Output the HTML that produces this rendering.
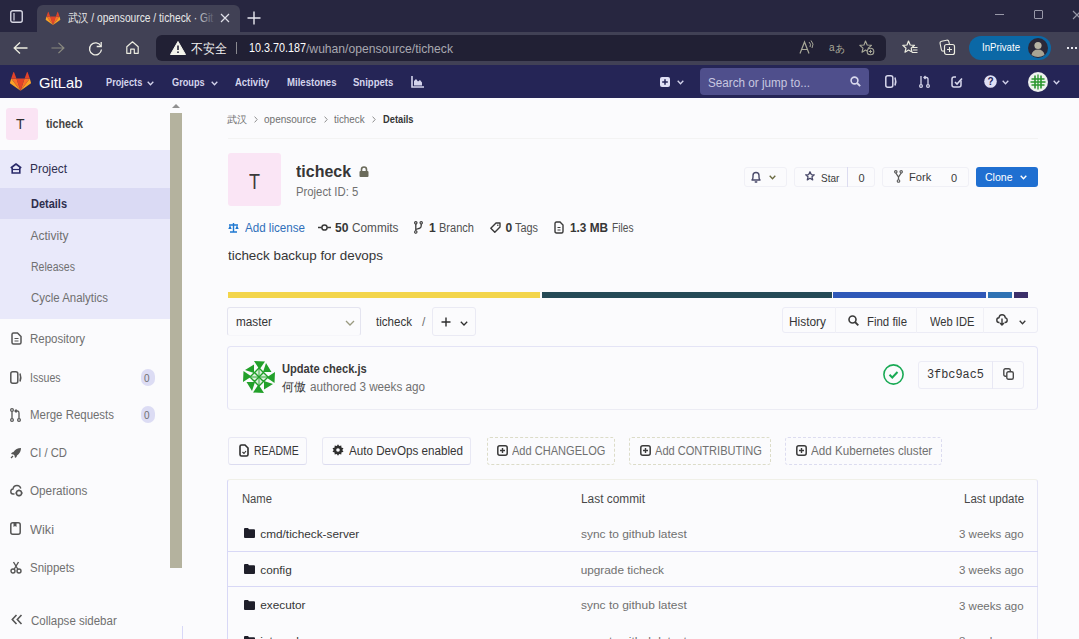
<!DOCTYPE html>
<html><head><meta charset="utf-8"><title>ticheck · GitLab</title>
<style>
html,body{margin:0;padding:0;width:1079px;height:639px;overflow:hidden;background:#fbfbfd;font-family:"Liberation Sans",sans-serif;}
.a{position:absolute;box-sizing:border-box;}
.tx{position:absolute;white-space:pre;line-height:1;transform-origin:0 50%;font-family:"Liberation Sans",sans-serif;}
svg{position:absolute;overflow:visible;}
</style></head><body>
<!-- browser tab strip -->
<div class="a" style="left:0;top:0;width:1079px;height:33px;background:#272640"></div>
<div class="a" style="left:37px;top:5px;width:203px;height:28px;background:#414155;border-radius:6px 6px 0 0"></div>
<svg style="left:10px;top:10px" width="13" height="13" viewBox="0 0 13 13"><rect x="0.75" y="0.75" width="11.5" height="11.5" rx="2" fill="none" stroke="#d8d8e4" stroke-width="1.4"/><line x1="4" y1="3" x2="4" y2="10.5" stroke="#d8d8e4" stroke-width="1.2"/></svg>
<!-- favicon -->
<svg style="left:45px;top:12px" width="16" height="13" viewBox="0 0 36 32"><path d="M18 32 L25 11 H11 Z" fill="#e24329"/><path d="M18 32 L11 11 H2 Z" fill="#fc6d26"/><path d="M2 11 L0 18 a1.5 1.5 0 0 0 .5 1.6 L18 32 Z" fill="#fca326"/><path d="M2 11 H11 L7 0 a.7.7 0 0 0 -1.3 0 Z" fill="#e24329"/><path d="M18 32 L25 11 H34 Z" fill="#fc6d26"/><path d="M34 11 L36 18 a1.5 1.5 0 0 1 -.5 1.6 L18 32 Z" fill="#fca326"/><path d="M34 11 H25 L29 0 a.7.7 0 0 1 1.3 0 Z" fill="#e24329"/></svg>
<svg style="left:220px;top:13px" width="10" height="10" viewBox="0 0 10 10"><path d="M1 1 L9 9 M9 1 L1 9" stroke="#e0e0e8" stroke-width="1.2"/></svg>
<svg style="left:247px;top:11px" width="14" height="14" viewBox="0 0 14 14"><path d="M7 0.5 V13.5 M0.5 7 H13.5" stroke="#e8e8f0" stroke-width="1.4"/></svg>
<!-- window controls -->
<div class="a" style="left:995px;top:14px;width:9px;height:1px;background:#9898a8"></div>
<div class="a" style="left:1034px;top:10px;width:9px;height:9px;border:1px solid #9898a8;border-radius:1px"></div>
<svg style="left:1072px;top:10px" width="10" height="10" viewBox="0 0 10 10"><path d="M1 1 L9 9 M9 1 L1 9" stroke="#9898a8" stroke-width="1.1"/></svg>
<!-- toolbar -->
<div class="a" style="left:0;top:32px;width:1079px;height:33px;background:#414155"></div>
<svg style="left:13px;top:41px" width="15" height="14" viewBox="0 0 15 14"><path d="M14.5 7 H1.5 M7 1.5 L1.2 7 L7 12.5" fill="none" stroke="#ecece0" stroke-width="1.3"/></svg>
<svg style="left:51px;top:41px" width="14" height="14" viewBox="0 0 15 14"><path d="M0.5 7 H13.5 M8 1.5 L13.8 7 L8 12.5" fill="none" stroke="#8a8a80" stroke-width="1.3"/></svg>
<svg style="left:88px;top:41px" width="15" height="15" viewBox="0 0 15 15"><path d="M12.8 5 A6 6 0 1 0 13.5 8.5" fill="none" stroke="#ecece4" stroke-width="1.3"/><path d="M13.2 1 V5.5 H8.7" fill="none" stroke="#ecece4" stroke-width="1.3"/></svg>
<svg style="left:126px;top:41px" width="13" height="13" viewBox="0 0 13 13"><path d="M0.8 5.8 L6.5 0.8 L12.2 5.8 V12.3 H8.3 V8.2 H4.7 V12.3 H0.8 Z" fill="none" stroke="#ecece0" stroke-width="1.2" stroke-linejoin="round"/></svg>
<div class="a" style="left:156px;top:35px;width:730px;height:26px;background:#212034;border-radius:6px"></div>
<svg style="left:170px;top:41px" width="16" height="14" viewBox="0 0 16 14"><path d="M8 0.5 L15.5 13.5 H0.5 Z" fill="#f4f4ec" stroke="#f4f4ec" stroke-linejoin="round"/><path d="M8 4.5 V9" stroke="#232236" stroke-width="1.6"/><circle cx="8" cy="11.2" r="0.9" fill="#232236"/></svg>
<div class="a" style="left:236px;top:42px;width:1px;height:12px;background:#8a8a90"></div>
<!-- right toolbar icons -->
<svg style="left:799px;top:40px" width="15" height="15" viewBox="0 0 15 15"><path d="M1 13.5 L5.5 2 L10 13.5 M2.8 9.5 H8.2" fill="none" stroke="#a8a898" stroke-width="1.2"/><path d="M10 2 Q12.5 4 11 7 M12 0.5 Q15.5 4 13 8" fill="none" stroke="#a8a898" stroke-width="1"/></svg>
<svg style="left:829px;top:41px" width="15" height="13" viewBox="0 0 15 13"><text x="0" y="10" font-family="Liberation Sans" font-size="10" fill="#a8a898">a</text><text x="6" y="11" font-family="Liberation Sans" font-size="10" fill="#a8a898">あ</text></svg>
<svg style="left:859px;top:40px" width="16" height="16" viewBox="0 0 16 16"><path d="M6.5 1 L8.2 5 L12.5 5.3 L9.2 8.2 L10 12 L6.5 10 L3 12.2 L4 8.2 L0.8 5.3 L5 5 Z" fill="none" stroke="#a8a898" stroke-width="1.1" stroke-linejoin="round"/><circle cx="11.5" cy="11.5" r="3.3" fill="#232236" stroke="#a8a898" stroke-width="1.1"/><path d="M11.5 9.8 V13.2 M9.8 11.5 H13.2" stroke="#a8a898" stroke-width="1"/></svg>
<svg style="left:902px;top:40px" width="16" height="15" viewBox="0 0 16 15"><path d="M6.5 1 L8.2 5 L12.5 5.3 L9.2 8.2 L10 12 L6.5 10 L3 12.2 L4 8.2 L0.8 5.3 L5 5 Z" fill="none" stroke="#ecece0" stroke-width="1.2" stroke-linejoin="round"/><path d="M10.5 7.5 H15.5 M11 10 H15.5 M10 12.5 H15.5" stroke="#ecece0" stroke-width="1.1"/></svg>
<svg style="left:940px;top:40px" width="15" height="15" viewBox="0 0 15 15"><rect x="0.7" y="0.7" width="9" height="10" rx="2" fill="none" stroke="#ecece0" stroke-width="1.1" transform="rotate(-12 5 6)"/><rect x="4.5" y="4.5" width="10" height="10" rx="2" fill="#414155" stroke="#ecece0" stroke-width="1.2"/><path d="M9.5 7 V12 M7 9.5 H12" stroke="#ecece0" stroke-width="1.1"/></svg>
<div class="a" style="left:969px;top:36px;width:82px;height:24px;background:#0b68a6;border-radius:12px"></div>
<svg style="left:1028px;top:38px" width="20" height="20" viewBox="0 0 20 20"><circle cx="10" cy="10" r="10" fill="#2a2838"/><circle cx="10" cy="7.5" r="3.6" fill="#b8b4a4"/><path d="M3.5 17 Q4.5 11.5 10 11.5 Q15.5 11.5 16.5 17 Q10 21 3.5 17 Z" fill="#a8a494"/></svg>
<div class="a" style="left:1067px;top:47px;width:2px;height:2px;background:#e8e8f0"></div>
<div class="a" style="left:1071px;top:47px;width:2px;height:2px;background:#e8e8f0"></div>
<div class="a" style="left:1075px;top:47px;width:2px;height:2px;background:#e8e8f0"></div>
<!-- gitlab navbar -->
<div class="a" style="left:0;top:65px;width:1079px;height:33px;background:#252556"></div>
<svg style="left:10px;top:72px" width="21" height="19" viewBox="0 0 36 32"><path d="M18 32 L25 11 H11 Z" fill="#e24329"/><path d="M18 32 L11 11 H2 Z" fill="#fc6d26"/><path d="M2 11 L0 18 a1.5 1.5 0 0 0 .5 1.6 L18 32 Z" fill="#fca326"/><path d="M2 11 H11 L7 0 a.7.7 0 0 0 -1.3 0 Z" fill="#e24329"/><path d="M18 32 L25 11 H34 Z" fill="#fc6d26"/><path d="M34 11 L36 18 a1.5 1.5 0 0 1 -.5 1.6 L18 32 Z" fill="#fca326"/><path d="M34 11 H25 L29 0 a.7.7 0 0 1 1.3 0 Z" fill="#e24329"/></svg>
<svg style="left:147px;top:81px" width="7" height="5" viewBox="0 0 7 5"><path d="M0.7 0.8 L3.5 3.8 L6.3 0.8" fill="none" stroke="#d4d4ec" stroke-width="1.3"/></svg>
<svg style="left:211px;top:81px" width="7" height="5" viewBox="0 0 7 5"><path d="M0.7 0.8 L3.5 3.8 L6.3 0.8" fill="none" stroke="#d4d4ec" stroke-width="1.3"/></svg>
<svg style="left:411px;top:76px" width="13" height="12" viewBox="0 0 13 12"><path d="M1 0 V11 H13" fill="none" stroke="#d4d4ec" stroke-width="1.6"/><path d="M3 9.5 V5 L5 3 L7 5.5 L9 4 L11 6.5 V9.5 Z" fill="#d4d4ec"/></svg>
<div class="a" style="left:660px;top:77px;width:10px;height:10px;background:#e0e0f4;border-radius:2px"></div>
<svg style="left:660px;top:77px" width="10" height="10" viewBox="0 0 10 10"><path d="M5 2.2 V7.8 M2.2 5 H7.8" stroke="#252556" stroke-width="1.5"/></svg>
<svg style="left:677px;top:80px" width="7" height="5" viewBox="0 0 7 5"><path d="M0.7 0.8 L3.5 3.8 L6.3 0.8" fill="none" stroke="#d4d4ec" stroke-width="1.3"/></svg>
<div class="a" style="left:700px;top:68px;width:169px;height:27px;background:#4f4f8c;border-radius:4px"></div>
<svg style="left:850px;top:76px" width="11" height="11" viewBox="0 0 11 11"><circle cx="4.5" cy="4.5" r="3.4" fill="none" stroke="#d8d8ec" stroke-width="1.6"/><path d="M7 7 L10.2 10.2" stroke="#d8d8ec" stroke-width="1.8"/></svg>
<svg style="left:885px;top:75px" width="12" height="13" viewBox="0 0 12 13"><rect x="0.8" y="0.8" width="7" height="11.4" rx="2" fill="none" stroke="#d8d8ec" stroke-width="1.5"/><path d="M10 2.5 Q11.5 6.5 10 10.5" fill="none" stroke="#d8d8ec" stroke-width="1.5"/></svg>
<svg style="left:919px;top:75px" width="11" height="13" viewBox="0 0 11 13"><circle cx="2" cy="11" r="1.4" fill="none" stroke="#d8d8ec" stroke-width="1.2"/><circle cx="9" cy="11" r="1.4" fill="none" stroke="#d8d8ec" stroke-width="1.2"/><path d="M2 1 V9.5 M9 9.5 V4 Q9 2.5 7.5 2.5 H5 M6.5 1 L5 2.5 L6.5 4" fill="none" stroke="#d8d8ec" stroke-width="1.3"/></svg>
<svg style="left:951px;top:75px" width="12" height="13" viewBox="0 0 12 13"><path d="M10 5.5 V10 Q10 12 8 12 H3 Q1 12 1 10 V4 Q1 2 3 2 H5" fill="none" stroke="#d8d8ec" stroke-width="1.5"/><path d="M4 7 L6 9 L11 3.5" fill="none" stroke="#d8d8ec" stroke-width="1.6"/></svg>
<svg style="left:984px;top:75px" width="13" height="13" viewBox="0 0 13 13"><circle cx="6.5" cy="6.5" r="6.3" fill="#e0e0f4"/><text x="6.5" y="10.2" text-anchor="middle" font-family="Liberation Sans" font-weight="700" font-size="10" fill="#252556">?</text></svg>
<svg style="left:1002px;top:80px" width="7" height="5" viewBox="0 0 7 5"><path d="M0.7 0.8 L3.5 3.8 L6.3 0.8" fill="none" stroke="#d4d4ec" stroke-width="1.3"/></svg>
<svg style="left:1028px;top:72px" width="20" height="20" viewBox="0 0 20 20"><circle cx="10" cy="10" r="10" fill="#eef2ee"/><path d="M7 3.5 V16.5 M13 3.5 V16.5 M3.5 7 H16.5 M3.5 13 H16.5" stroke="#2a962e" stroke-width="1.6"/><path d="M10 2.5 V17.5 M2.5 10 H17.5" stroke="#2a962e" stroke-width="1.3"/></svg>
<svg style="left:1053px;top:80px" width="7" height="5" viewBox="0 0 7 5"><path d="M0.7 0.8 L3.5 3.8 L6.3 0.8" fill="none" stroke="#d4d4ec" stroke-width="1.3"/></svg>
<!-- sidebar -->
<div class="a" style="left:0;top:150px;width:170px;height:169px;background:#e9e9fa"></div>
<div class="a" style="left:0;top:188px;width:170px;height:31px;background:#dadaf4"></div>
<div class="a" style="left:6px;top:108px;width:32px;height:32px;background:#fae4f4;border-radius:3px"></div>
<span class="tx" style="left:16px;top:117px;font-size:14px;color:#2e2e2e">T</span>
<svg style="left:10px;top:163px" width="12" height="11" viewBox="0 0 12 11"><path d="M0.8 5 L6 1 L11.2 5" fill="none" stroke="#2a2a6a" stroke-width="1.6" stroke-linejoin="round"/><path d="M2.2 4.5 V10 H9.8 V4.5" fill="none" stroke="#2a2a6a" stroke-width="1.6"/><path d="M3 6.5 H9" stroke="#2a2a6a" stroke-width="1.2"/></svg>
<svg style="left:11px;top:332px" width="11" height="13" viewBox="0 0 11 13"><path d="M1 2.5 Q1 1 2.5 1 H6.5 L10 4.5 V10.5 Q10 12 8.5 12 H2.5 Q1 12 1 10.5 Z" fill="none" stroke="#555" stroke-width="1.5"/><path d="M3.5 6.5 H7.5 M3.5 9 H7.5" stroke="#555" stroke-width="1.1"/></svg>
<svg style="left:10px;top:371px" width="12" height="13" viewBox="0 0 12 13"><rect x="0.8" y="0.8" width="7" height="11.4" rx="2" fill="none" stroke="#555" stroke-width="1.5"/><path d="M10 2.5 Q11.5 6.5 10 10.5" fill="none" stroke="#555" stroke-width="1.5"/></svg>
<svg style="left:10px;top:408px" width="11" height="14" viewBox="0 0 11 14"><circle cx="2" cy="12" r="1.4" fill="none" stroke="#555" stroke-width="1.2"/><circle cx="9" cy="12" r="1.4" fill="none" stroke="#555" stroke-width="1.2"/><circle cx="2" cy="2" r="1.4" fill="none" stroke="#555" stroke-width="1.2"/><path d="M2 3.5 V10.5 M9 10.5 V5 Q9 3 7.5 3 H5 M6.5 1.5 L5 3 L6.5 4.5" fill="none" stroke="#555" stroke-width="1.3"/></svg>
<svg style="left:10px;top:447px" width="12" height="12" viewBox="0 0 12 12"><path d="M11 1 Q6 1 3.5 5 L2 5.5 L1 7 L3.5 7.5 L4.5 8.5 L5 11 L6.5 10 L7 8.5 Q11 6 11 1 Z" fill="#555"/><path d="M1 11 L3 9" stroke="#555" stroke-width="1.3"/></svg>
<svg style="left:10px;top:484px" width="13" height="13" viewBox="0 0 13 13"><path d="M4.5 10 H3 Q0.8 10 0.8 7.5 Q0.8 5.2 3 5 Q3.5 1.5 7 1.5 Q10 1.5 10.8 4.5" fill="none" stroke="#555" stroke-width="1.4"/><circle cx="9" cy="9" r="2.6" fill="none" stroke="#555" stroke-width="1.5"/><path d="M9 5.5 V6.2 M9 11.8 V12.5 M5.5 9 H6.2 M11.8 9 H12.5" stroke="#555" stroke-width="1.3"/></svg>
<svg style="left:10px;top:522px" width="11" height="13" viewBox="0 0 11 13"><rect x="0.8" y="0.8" width="9.4" height="11.4" rx="2" fill="none" stroke="#555" stroke-width="1.5"/><path d="M3.5 1 V5 L5 4 L6.5 5 V1" fill="#555"/></svg>
<svg style="left:10px;top:561px" width="12" height="13" viewBox="0 0 12 13"><circle cx="3" cy="10" r="2" fill="none" stroke="#555" stroke-width="1.4"/><circle cx="9" cy="10" r="2" fill="none" stroke="#555" stroke-width="1.4"/><path d="M4 8.5 L8.5 1 M8 8.5 L3.5 1" stroke="#555" stroke-width="1.4"/></svg>
<svg style="left:11px;top:614px" width="12" height="11" viewBox="0 0 12 11"><path d="M5.5 1 L1.3 5.5 L5.5 10 M10.5 1 L6.3 5.5 L10.5 10" fill="none" stroke="#555" stroke-width="1.6"/></svg>
<div class="a" style="left:141px;top:369px;width:14px;height:17px;background:#dcdcf4;border-radius:8px"></div>
<div class="a" style="left:141px;top:406px;width:14px;height:17px;background:#dcdcf4;border-radius:8px"></div>
<div class="a" style="left:170px;top:113px;width:12px;height:455px;background:#b4b29e"></div>
<svg style="left:172px;top:103px" width="8" height="5" viewBox="0 0 8 5"><path d="M0 5 L4 1 L8 5 Z" fill="#909090"/></svg>
<div class="a" style="left:182px;top:626px;width:1px;height:13px;background:#d8d8f8"></div>
<!-- breadcrumb -->
<svg style="left:254px;top:116px" width="4" height="7" viewBox="0 0 4 7"><path d="M0.6 0.6 L3.2 3.5 L0.6 6.4" fill="none" stroke="#909090" stroke-width="1"/></svg>
<svg style="left:324px;top:116px" width="4" height="7" viewBox="0 0 4 7"><path d="M0.6 0.6 L3.2 3.5 L0.6 6.4" fill="none" stroke="#909090" stroke-width="1"/></svg>
<svg style="left:372px;top:116px" width="4" height="7" viewBox="0 0 4 7"><path d="M0.6 0.6 L3.2 3.5 L0.6 6.4" fill="none" stroke="#909090" stroke-width="1"/></svg>
<div class="a" style="left:228px;top:138px;width:810px;height:1px;background:#f3f3f3"></div>
<!-- project header -->
<div class="a" style="left:228px;top:153px;width:53px;height:53px;background:#fae5f5;border-radius:3px"></div>
<span class="tx" style="left:249px;top:170.5px;font-size:22.5px;color:#3a3a3a;transform:scaleX(0.8)">T</span>
<svg style="left:359px;top:166px" width="10" height="11" viewBox="0 0 10 11"><path d="M2.5 5 V3.5 Q2.5 1 5 1 Q7.5 1 7.5 3.5 V5" fill="none" stroke="#6a6a5a" stroke-width="1.6"/><rect x="0.5" y="5" width="9" height="6" rx="1" fill="#6a6a5a"/></svg>
<div class="a" style="left:744px;top:167px;width:43px;height:20px;border:1px solid #f0f0f6;border-radius:3px"></div>
<svg style="left:751px;top:171px" width="10" height="12" viewBox="0 0 10 12"><path d="M1 9 Q2 8 2 6 V4.5 Q2 1.5 5 1.5 Q8 1.5 8 4.5 V6 Q8 8 9 9 Z" fill="none" stroke="#4a4a6a" stroke-width="1.4" stroke-linejoin="round"/><path d="M3.8 10.5 Q5 11.8 6.2 10.5" fill="none" stroke="#4a4a6a" stroke-width="1.2"/></svg>
<svg style="left:769px;top:175px" width="7" height="5" viewBox="0 0 7 5"><path d="M0.7 0.8 L3.5 3.8 L6.3 0.8" fill="none" stroke="#6a6a40" stroke-width="1.3"/></svg>
<div class="a" style="left:794px;top:167px;width:81px;height:20px;border:1px solid #f0f0f6;border-radius:3px"></div>
<div class="a" style="left:847px;top:167px;width:1px;height:20px;background:#dcdcf0"></div>
<svg style="left:805px;top:171px" width="10" height="10" viewBox="0 0 10 10"><path d="M5 0.8 L6.3 3.6 L9.3 3.8 L7 5.8 L7.7 8.9 L5 7.3 L2.3 8.9 L3 5.8 L0.7 3.8 L3.7 3.6 Z" fill="none" stroke="#4a4a6a" stroke-width="1.3" stroke-linejoin="round"/></svg>
<div class="a" style="left:882px;top:167px;width:87px;height:20px;border:1px solid #f0f0f6;border-radius:3px"></div>
<svg style="left:894px;top:170px" width="9" height="13" viewBox="0 0 9 13"><circle cx="1.8" cy="1.8" r="1.2" fill="none" stroke="#5a5a5a" stroke-width="1.1"/><circle cx="7.2" cy="1.8" r="1.2" fill="none" stroke="#5a5a5a" stroke-width="1.1"/><circle cx="4.5" cy="11" r="1.3" fill="none" stroke="#5a5a5a" stroke-width="1.1"/><path d="M1.8 3 L4.5 7 L7.2 3 M4.5 7 V9.7" fill="none" stroke="#5a5a5a" stroke-width="1.3"/></svg>
<div class="a" style="left:975.5px;top:167px;width:62px;height:19.5px;background:#1f6fd1;border-radius:3px"></div>
<svg style="left:1020px;top:175px" width="7" height="5" viewBox="0 0 7 5"><path d="M0.7 0.8 L3.5 3.8 L6.3 0.8" fill="none" stroke="#ffffff" stroke-width="1.4"/></svg>
<!-- stats icons -->
<svg style="left:228px;top:222px" width="11" height="11" viewBox="0 0 11 11"><path d="M5.5 1 V10 M2 10 H9 M1 3 H10" stroke="#1f78d1" stroke-width="1.4"/><path d="M0.3 7 L2 3 L3.7 7 Z M7.3 7 L9 3 L10.7 7 Z" fill="#1f78d1"/></svg>
<svg style="left:318px;top:223px" width="13" height="9" viewBox="0 0 13 9"><circle cx="6.5" cy="4.5" r="2.6" fill="none" stroke="#3a3a3a" stroke-width="1.5"/><path d="M0 4.5 H3.8 M9.2 4.5 H13" stroke="#3a3a3a" stroke-width="1.5"/></svg>
<svg style="left:414px;top:221px" width="9" height="13" viewBox="0 0 9 13"><circle cx="1.8" cy="1.8" r="1.2" fill="none" stroke="#3a3a3a" stroke-width="1.1"/><circle cx="7.2" cy="1.8" r="1.2" fill="none" stroke="#3a3a3a" stroke-width="1.1"/><circle cx="1.8" cy="11" r="1.2" fill="none" stroke="#3a3a3a" stroke-width="1.1"/><path d="M1.8 3 V9.8 M7.2 3 V5 Q7.2 7 5 7.5 L1.8 8.5" fill="none" stroke="#3a3a3a" stroke-width="1.3"/></svg>
<svg style="left:490px;top:222px" width="11" height="11" viewBox="0 0 11 11"><path d="M6 1 H10 V5 L4.8 10.2 L0.8 6.2 Z" fill="none" stroke="#3a3a3a" stroke-width="1.4" stroke-linejoin="round"/><circle cx="7.8" cy="3.2" r="0.8" fill="#3a3a3a"/></svg>
<svg style="left:554px;top:221px" width="10" height="13" viewBox="0 0 10 13"><path d="M1 2.5 Q1 1 2.5 1 H6 L9 4 V10.5 Q9 12 7.5 12 H2.5 Q1 12 1 10.5 Z" fill="none" stroke="#3a3a3a" stroke-width="1.4"/><path d="M3.5 6.5 H6.5 M3.5 9 H6.5" stroke="#3a3a3a" stroke-width="1"/></svg>
<!-- tree controls -->
<div class="a" style="left:227px;top:307px;width:134px;height:29px;border:1px solid #e4e4f0;border-bottom-color:#f6f6fa;border-radius:3px"></div>
<svg style="left:345px;top:320px" width="10" height="6" viewBox="0 0 10 6"><path d="M1 1 L5 5 L9 1" fill="none" stroke="#9a9a80" stroke-width="1.3"/></svg>
<div class="a" style="left:432px;top:307px;width:44px;height:29px;border:1px solid #eaeaf4;border-radius:3px"></div>
<svg style="left:441px;top:317px" width="10" height="10" viewBox="0 0 10 10"><path d="M5 0.5 V9.5 M0.5 5 H9.5" stroke="#2e2e2e" stroke-width="1.4"/></svg>
<svg style="left:460px;top:321px" width="8" height="5" viewBox="0 0 8 5"><path d="M0.8 0.8 L4 4 L7.2 0.8" fill="none" stroke="#2e2e2e" stroke-width="1.3"/></svg>
<div class="a" style="left:781.5px;top:307px;width:256px;height:26px;border:1px solid #ececf6;border-radius:3px"></div>
<div class="a" style="left:835px;top:307px;width:1px;height:26px;background:#f0f0f6"></div>
<div class="a" style="left:916px;top:307px;width:1px;height:26px;background:#f0f0f6"></div>
<div class="a" style="left:983px;top:307px;width:1px;height:26px;background:#f0f0f6"></div>
<svg style="left:848px;top:315px" width="11" height="11" viewBox="0 0 11 11"><circle cx="4.5" cy="4.5" r="3.5" fill="none" stroke="#3a3a3a" stroke-width="1.6"/><path d="M7 7 L10.3 10.3" stroke="#3a3a3a" stroke-width="1.8"/></svg>
<svg style="left:996px;top:314px" width="12" height="12" viewBox="0 0 12 12"><path d="M3.5 8.5 H3 Q0.8 8.5 0.8 6 Q0.8 3.8 3 3.7 Q3.5 0.8 6 0.8 Q9 0.8 9.3 3.7 Q11.2 4 11.2 6 Q11.2 8.5 9 8.5 H8.5" fill="none" stroke="#3a3a3a" stroke-width="1.4"/><path d="M6 4.5 V11 M4 9 L6 11 L8 9" fill="none" stroke="#3a3a3a" stroke-width="1.4"/></svg>
<svg style="left:1019px;top:320px" width="7" height="5" viewBox="0 0 7 5"><path d="M0.7 0.8 L3.5 3.8 L6.3 0.8" fill="none" stroke="#3a3a3a" stroke-width="1.3"/></svg>
<!-- commit box -->
<div class="a" style="left:227px;top:345.5px;width:811px;height:64px;border:1px solid #e4e4f6;border-bottom-color:#ececf4;border-radius:4px"></div>
<svg style="left:241.5px;top:359.5px" width="34" height="34" viewBox="0 0 34 34"><defs><g id="bl"><path d="M3 10 L12 4.5 L12 13 Z M12 1 L23 1.5 L17.5 9.5 Z" fill="#22a02a"/></g></defs><use href="#bl"/><use href="#bl" transform="rotate(90 17 17)"/><use href="#bl" transform="rotate(180 17 17)"/><use href="#bl" transform="rotate(270 17 17)"/><path d="M17 8 L26 17 L17 26 L8 17 Z" fill="#dcf0dc"/><path d="M17 8 L21.5 12.5 L17 17 L12.5 12.5 Z M21.5 12.5 L26 17 L21.5 21.5 L17 17 Z M17 17 L21.5 21.5 L17 26 L12.5 21.5 Z M12.5 12.5 L17 17 L12.5 21.5 L8 17 Z" fill="none" stroke="#22a02a" stroke-width="1.4"/><path d="M12 12 L22 22 M22 12 L12 22 M17 9 V25 M9 17 H25" stroke="#22a02a" stroke-width="0.9"/></svg>
<svg style="left:883px;top:364px" width="21" height="21" viewBox="0 0 21 21"><circle cx="10.5" cy="10.5" r="9.6" fill="none" stroke="#1aaa55" stroke-width="1.6"/><path d="M6.5 10.8 L9.3 13.5 L14.5 8" fill="none" stroke="#1aaa55" stroke-width="2"/></svg>
<div class="a" style="left:917.5px;top:360.5px;width:106px;height:28.5px;border:1px solid #ececf6;border-radius:3px"></div>
<div class="a" style="left:992px;top:361px;width:1px;height:28px;background:#e8e8f4"></div>
<svg style="left:1003px;top:368px" width="11" height="12" viewBox="0 0 11 12"><rect x="0.8" y="0.8" width="6.5" height="7.5" rx="1.5" fill="none" stroke="#4a4a4a" stroke-width="1.4"/><rect x="3.8" y="3.8" width="6.5" height="7.5" rx="1.5" fill="#fbfbfd" stroke="#4a4a4a" stroke-width="1.4"/></svg>
<!-- buttons -->
<div class="a" style="left:227.5px;top:436.5px;width:79px;height:28px;border:1px solid #e8e8f4;border-bottom-color:#dcdcf0;border-radius:3px"></div>
<svg style="left:239px;top:444px" width="10" height="13" viewBox="0 0 10 13"><path d="M1 2.5 Q1 1 2.5 1 H6 L9 4 V10.5 Q9 12 7.5 12 H2.5 Q1 12 1 10.5 Z" fill="none" stroke="#2e2e2e" stroke-width="1.6"/><path d="M3.5 8 L5 9.5 L7 7" fill="none" stroke="#2e2e2e" stroke-width="1.1"/></svg>
<div class="a" style="left:322px;top:436.5px;width:149px;height:28px;border:1px solid #e8e8f4;border-bottom-color:#dcdcf0;border-radius:3px"></div>
<svg style="left:332px;top:444px" width="12" height="12" viewBox="0 0 12 12"><path d="M6 0.3 L7.2 2 L9.3 1.4 L9.4 3.5 L11.5 4.3 L10.3 6 L11.5 7.7 L9.4 8.5 L9.3 10.6 L7.2 10 L6 11.7 L4.8 10 L2.7 10.6 L2.6 8.5 L0.5 7.7 L1.7 6 L0.5 4.3 L2.6 3.5 L2.7 1.4 L4.8 2 Z" fill="#2e2e2e"/><circle cx="6" cy="6" r="1.8" fill="#fbfbfd"/></svg>
<div class="a" style="left:486.5px;top:436.5px;width:128px;height:28px;border:1px dashed #dcdcc8;border-radius:3px"></div>
<div class="a" style="left:628.5px;top:436.5px;width:142px;height:28px;border:1px dashed #dcdcc8;border-radius:3px"></div>
<div class="a" style="left:784.5px;top:436.5px;width:157px;height:28px;border:1px dashed #dcdcf0;border-radius:3px"></div>
<svg style="left:497px;top:445px" width="11" height="11" viewBox="0 0 11 11"><rect x="0.8" y="0.8" width="9.4" height="9.4" rx="2" fill="none" stroke="#3a3a3a" stroke-width="1.5"/><path d="M5.5 3 V8 M3 5.5 H8" stroke="#3a3a3a" stroke-width="1.4"/></svg>
<svg style="left:639.5px;top:445px" width="11" height="11" viewBox="0 0 11 11"><rect x="0.8" y="0.8" width="9.4" height="9.4" rx="2" fill="none" stroke="#3a3a3a" stroke-width="1.5"/><path d="M5.5 3 V8 M3 5.5 H8" stroke="#3a3a3a" stroke-width="1.4"/></svg>
<svg style="left:795.5px;top:445px" width="11" height="11" viewBox="0 0 11 11"><rect x="0.8" y="0.8" width="9.4" height="9.4" rx="2" fill="none" stroke="#3a3a3a" stroke-width="1.5"/><path d="M5.5 3 V8 M3 5.5 H8" stroke="#3a3a3a" stroke-width="1.4"/></svg>
<!-- table -->
<div class="a" style="left:227px;top:479px;width:811px;height:170px;border:1px solid #d8d8f6;border-top-color:#f0f0e8;border-right-color:#e4e4f6;border-radius:3px 3px 0 0"></div>
<div class="a" style="left:228px;top:551px;width:810px;height:1px;background:#d8d8f6"></div>
<div class="a" style="left:228px;top:586px;width:810px;height:1px;background:#d8d8f6"></div>
<svg style="left:244px;top:528px" width="11" height="10" viewBox="0 0 11 10"><path d="M0 1 Q0 0 1 0 H4 L5 1.3 H10 Q11 1.3 11 2.3 V9 Q11 10 10 10 H1 Q0 10 0 9 Z" fill="#1f1f2a"/></svg>
<svg style="left:244px;top:563.5px" width="11" height="10" viewBox="0 0 11 10"><path d="M0 1 Q0 0 1 0 H4 L5 1.3 H10 Q11 1.3 11 2.3 V9 Q11 10 10 10 H1 Q0 10 0 9 Z" fill="#1f1f2a"/></svg>
<svg style="left:244px;top:599.5px" width="11" height="10" viewBox="0 0 11 10"><path d="M0 1 Q0 0 1 0 H4 L5 1.3 H10 Q11 1.3 11 2.3 V9 Q11 10 10 10 H1 Q0 10 0 9 Z" fill="#1f1f2a"/></svg>
<svg style="left:244px;top:635.5px" width="11" height="10" viewBox="0 0 11 10"><path d="M0 1 Q0 0 1 0 H4 L5 1.3 H10 Q11 1.3 11 2.3 V9 Q11 10 10 10 H1 Q0 10 0 9 Z" fill="#1f1f2a"/></svg>
<!-- language bar -->
<div class="a" style="left:228px;top:292px;width:311.5px;height:6px;background:#f3d54b"></div>
<div class="a" style="left:541.5px;top:292px;width:290.5px;height:6px;background:#254a56"></div>
<div class="a" style="left:833px;top:292px;width:153px;height:6px;background:#2f58b8"></div>
<div class="a" style="left:988px;top:292px;width:24px;height:6px;background:#2f72b4"></div>
<div class="a" style="left:1014px;top:292px;width:14px;height:6px;background:#3c2f6a"></div>

<span class="tx" style="left:68.0px;top:11.8px;font-size:12.00px;color:#e8e8e8;transform:scaleX(0.853);">武汉 / opensource / ticheck · Git</span>
<span class="tx" style="left:191.0px;top:41.5px;font-size:13.00px;color:#f0f0f0;transform:scaleX(0.923);">不安全</span>
<span class="tx" style="left:249.0px;top:41.8px;font-size:12.69px;color:#ffffff;transform:scaleX(0.850);">10.3.70.187</span>
<span class="tx" style="left:306.0px;top:41.5px;font-size:13.00px;color:#a8a8b0;transform:scaleX(0.933);">/wuhan/opensource/ticheck</span>
<span class="tx" style="left:982.0px;top:42.4px;font-size:11.33px;color:#ffffff;transform:scaleX(0.850);">InPrivate</span>
<span class="tx" style="left:38.5px;top:75.1px;font-size:15.00px;color:#ffffff;transform:scaleX(0.984);">GitLab</span>
<span class="tx" style="left:106.0px;top:76.8px;font-size:10.82px;color:#d4d4ec;font-weight:700;transform:scaleX(0.850);">Projects</span>
<span class="tx" style="left:172.3px;top:76.8px;font-size:10.82px;color:#d4d4ec;font-weight:700;transform:scaleX(0.850);">Groups</span>
<span class="tx" style="left:234.8px;top:76.7px;font-size:11.00px;color:#d4d4ec;font-weight:700;transform:scaleX(0.860);">Activity</span>
<span class="tx" style="left:286.5px;top:76.7px;font-size:11.00px;color:#d4d4ec;font-weight:700;transform:scaleX(0.871);">Milestones</span>
<span class="tx" style="left:352.7px;top:76.7px;font-size:11.00px;color:#d4d4ec;font-weight:700;transform:scaleX(0.868);">Snippets</span>
<span class="tx" style="left:707.6px;top:76.8px;font-size:12.00px;color:#c8c8e0;transform:scaleX(0.974);">Search or jump to...</span>
<span class="tx" style="left:46.0px;top:118.3px;font-size:12.00px;color:#444444;font-weight:700;transform:scaleX(0.895);">ticheck</span>
<span class="tx" style="left:30.0px;top:163.3px;font-size:12.00px;color:#2e2e4e;transform:scaleX(0.990);">Project</span>
<span class="tx" style="left:30.5px;top:198.3px;font-size:12.00px;color:#2e2e4e;font-weight:700;transform:scaleX(0.915);">Details</span>
<span class="tx" style="left:30.5px;top:230.3px;font-size:12.00px;color:#707070;">Activity</span>
<span class="tx" style="left:30.5px;top:261.3px;font-size:12.00px;color:#707070;transform:scaleX(0.879);">Releases</span>
<span class="tx" style="left:30.5px;top:292.3px;font-size:12.00px;color:#707070;transform:scaleX(0.954);">Cycle Analytics</span>
<span class="tx" style="left:30.0px;top:333.3px;font-size:12.00px;color:#707070;transform:scaleX(0.959);">Repository</span>
<span class="tx" style="left:30.0px;top:371.8px;font-size:12.00px;color:#707070;transform:scaleX(0.882);">Issues</span>
<span class="tx" style="left:30.0px;top:409.3px;font-size:12.00px;color:#707070;transform:scaleX(0.954);">Merge Requests</span>
<span class="tx" style="left:30.0px;top:447.3px;font-size:12.00px;color:#707070;transform:scaleX(0.940);">CI / CD</span>
<span class="tx" style="left:30.0px;top:485.3px;font-size:12.00px;color:#707070;transform:scaleX(0.976);">Operations</span>
<span class="tx" style="left:30.0px;top:523.8px;font-size:12.00px;color:#707070;transform:scaleX(1.059);">Wiki</span>
<span class="tx" style="left:30.0px;top:562.3px;font-size:12.00px;color:#707070;transform:scaleX(0.955);">Snippets</span>
<span class="tx" style="left:30.7px;top:615.3px;font-size:12.00px;color:#707070;transform:scaleX(0.959);">Collapse sidebar</span>
<span class="tx" style="left:144.0px;top:373.5px;font-size:10.00px;color:#707070;">0</span>
<span class="tx" style="left:144.0px;top:411.0px;font-size:10.00px;color:#707070;">0</span>
<span class="tx" style="left:227.4px;top:115.0px;font-size:10.00px;color:#707070;">武汉</span>
<span class="tx" style="left:264.4px;top:114.2px;font-size:11.00px;color:#707070;transform:scaleX(0.910);">opensource</span>
<span class="tx" style="left:334.4px;top:114.2px;font-size:11.00px;color:#707070;transform:scaleX(0.893);">ticheck</span>
<span class="tx" style="left:382.5px;top:114.2px;font-size:10.94px;color:#363636;font-weight:700;transform:scaleX(0.850);">Details</span>
<span class="tx" style="left:295.6px;top:162.6px;font-size:17.00px;color:#363636;font-weight:700;transform:scaleX(0.939);">ticheck</span>
<span class="tx" style="left:295.6px;top:186.1px;font-size:12.00px;color:#707070;transform:scaleX(0.943);">Project ID: 5</span>
<span class="tx" style="left:820.9px;top:172.9px;font-size:10.80px;color:#3a3a3a;transform:scaleX(0.924);">Star</span>
<span class="tx" style="left:858.5px;top:172.7px;font-size:11.00px;color:#3a3a3a;">0</span>
<span class="tx" style="left:909.4px;top:172.3px;font-size:11.50px;color:#3a3a3a;transform:scaleX(0.970);">Fork</span>
<span class="tx" style="left:951.0px;top:172.7px;font-size:11.00px;color:#3a3a3a;">0</span>
<span class="tx" style="left:984.7px;top:172.3px;font-size:11.50px;color:#ffffff;transform:scaleX(0.918);">Clone</span>
<span class="tx" style="left:244.5px;top:222.3px;font-size:12.00px;color:#2f6fba;transform:scaleX(0.967);">Add license</span>
<span class="tx" style="left:335.0px;top:222.3px;font-size:12.00px;color:#363636;font-weight:700;transform:scaleX(1.011);">50</span>
<span class="tx" style="left:351.7px;top:222.3px;font-size:12.00px;color:#505050;transform:scaleX(0.982);">Commits</span>
<span class="tx" style="left:429.0px;top:222.3px;font-size:12.00px;color:#363636;font-weight:700;">1</span>
<span class="tx" style="left:439.0px;top:222.3px;font-size:12.00px;color:#505050;transform:scaleX(0.920);">Branch</span>
<span class="tx" style="left:505.5px;top:222.3px;font-size:12.00px;color:#363636;font-weight:700;">0</span>
<span class="tx" style="left:515.0px;top:222.3px;font-size:12.00px;color:#505050;transform:scaleX(0.907);">Tags</span>
<span class="tx" style="left:569.5px;top:222.3px;font-size:12.00px;color:#363636;font-weight:700;transform:scaleX(0.982);">1.3 MB</span>
<span class="tx" style="left:611.5px;top:222.4px;font-size:11.98px;color:#505050;transform:scaleX(0.850);">Files</span>
<span class="tx" style="left:228.0px;top:249.2px;font-size:13.00px;color:#363636;transform:scaleX(1.031);">ticheck backup for devops</span>
<span class="tx" style="left:236.3px;top:316.3px;font-size:12.00px;color:#363636;transform:scaleX(0.981);">master</span>
<span class="tx" style="left:375.8px;top:316.3px;font-size:12.00px;color:#363636;transform:scaleX(0.964);">ticheck</span>
<span class="tx" style="left:422.0px;top:316.3px;font-size:12.00px;color:#707070;">/</span>
<span class="tx" style="left:789.0px;top:316.3px;font-size:12.00px;color:#363636;transform:scaleX(0.991);">History</span>
<span class="tx" style="left:867.0px;top:316.3px;font-size:12.00px;color:#363636;transform:scaleX(0.952);">Find file</span>
<span class="tx" style="left:929.6px;top:316.3px;font-size:12.00px;color:#363636;transform:scaleX(0.929);">Web IDE</span>
<span class="tx" style="left:282.3px;top:363.3px;font-size:12.00px;color:#3a3a3a;font-weight:700;transform:scaleX(0.927);">Update check.js</span>
<span class="tx" style="left:282.3px;top:381.3px;font-size:12.00px;color:#363636;">何傲</span>
<span class="tx" style="left:309.5px;top:381.3px;font-size:12.00px;color:#707070;transform:scaleX(0.974);">authored 3 weeks ago</span>
<span class="tx" style="left:927.0px;top:369.3px;font-size:12.00px;color:#363636;font-family:'Liberation Mono',monospace;transform:scaleX(0.989);">3fbc9ac5</span>
<span class="tx" style="left:254.3px;top:445.3px;font-size:12.00px;color:#363636;transform:scaleX(0.871);">README</span>
<span class="tx" style="left:348.5px;top:445.3px;font-size:12.00px;color:#363636;transform:scaleX(0.971);">Auto DevOps enabled</span>
<span class="tx" style="left:512.0px;top:445.3px;font-size:12.00px;color:#707070;transform:scaleX(0.921);">Add CHANGELOG</span>
<span class="tx" style="left:654.7px;top:445.3px;font-size:12.00px;color:#707070;transform:scaleX(0.922);">Add CONTRIBUTING</span>
<span class="tx" style="left:811.2px;top:445.3px;font-size:12.00px;color:#707070;transform:scaleX(0.972);">Add Kubernetes cluster</span>
<span class="tx" style="left:241.8px;top:492.8px;font-size:12.00px;color:#484848;transform:scaleX(0.937);">Name</span>
<span class="tx" style="left:580.7px;top:492.8px;font-size:12.00px;color:#484848;transform:scaleX(0.989);">Last commit</span>
<span class="tx" style="left:963.5px;top:492.8px;font-size:12.00px;color:#484848;transform:scaleX(0.957);">Last update</span>
<span class="tx" style="left:260.3px;top:528.8px;font-size:11.80px;color:#363636;">cmd/ticheck-server</span>
<span class="tx" style="left:580.7px;top:528.8px;font-size:11.80px;color:#707070;transform:scaleX(1.014);">sync to github latest</span>
<span class="tx" style="left:959.0px;top:529.1px;font-size:11.50px;color:#707070;">3 weeks ago</span>
<span class="tx" style="left:260.3px;top:564.5px;font-size:11.80px;color:#363636;">config</span>
<span class="tx" style="left:580.7px;top:564.5px;font-size:11.80px;color:#707070;">upgrade ticheck</span>
<span class="tx" style="left:959.0px;top:564.8px;font-size:11.50px;color:#707070;">3 weeks ago</span>
<span class="tx" style="left:260.3px;top:600.3px;font-size:11.80px;color:#363636;">executor</span>
<span class="tx" style="left:580.7px;top:600.3px;font-size:11.80px;color:#707070;transform:scaleX(1.014);">sync to github latest</span>
<span class="tx" style="left:959.0px;top:600.6px;font-size:11.50px;color:#707070;">3 weeks ago</span>
<span class="tx" style="left:260.3px;top:636.0px;font-size:11.80px;color:#363636;">internal</span>
<span class="tx" style="left:580.7px;top:636.0px;font-size:11.80px;color:#707070;transform:scaleX(1.014);">sync to github latest</span>
<span class="tx" style="left:959.0px;top:636.3px;font-size:11.50px;color:#707070;">3 weeks ago</span>
<div class="a" style="left:196px;top:10px;width:20px;height:16px;background:linear-gradient(90deg,rgba(65,65,85,0),#414155)"></div>
</body></html>
